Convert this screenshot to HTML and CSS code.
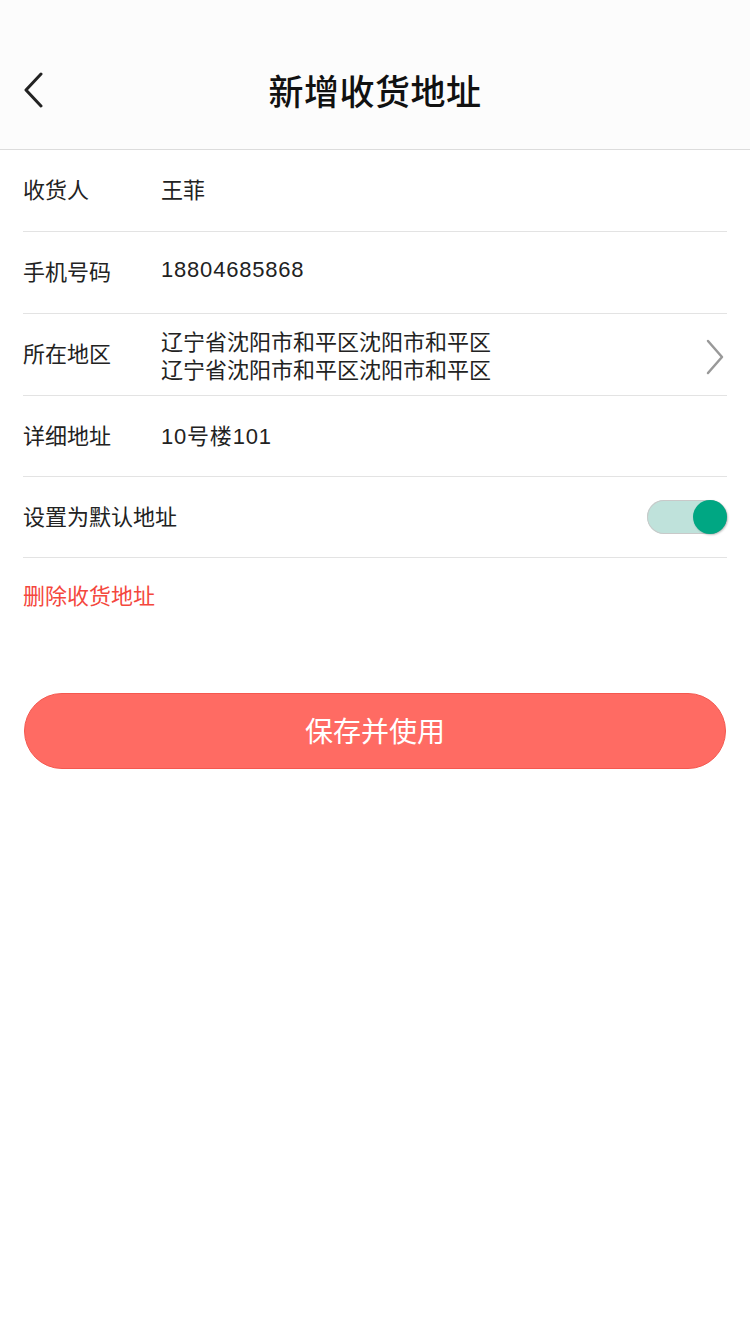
FILE: index.html
```html
<!DOCTYPE html>
<html lang="zh-CN">

<head>
    <meta charset="UTF-8">
    <meta name="viewport" content="width=device-width, initial-scale=1.0">
    <title>新增收货地址</title>
    <link rel="stylesheet" href="styles.css">
</head>

<body>

    <!-- Header -->
    <div class="header">
        <a class="back" href="#">
            <svg width="22" height="36" viewBox="0 0 22 36">
                <polyline points="19,2 4,18 19,34" fill="none" stroke="#222" stroke-width="3" stroke-linecap="round" stroke-linejoin="round" />
            </svg>
        </a>
        <h1>新增收货地址</h1>
    </div>

    <!-- Form -->
    <div class="form">
        <div class="row">
            <span class="label">收货人</span>
            <span class="value">王菲</span>
        </div>
        <div class="row">
            <span class="label">手机号码</span>
            <span class="value digits">18804685868</span>
        </div>
        <div class="row">
            <span class="label">所在地区</span>
            <div class="value multi">
                <div class="line">辽宁省沈阳市和平区沈阳市和平区</div>
                <div class="line">辽宁省沈阳市和平区沈阳市和平区</div>
            </div>
            <svg class="arrow" width="20" height="36" viewBox="0 0 20 36">
                <polyline points="3,2 17,18 3,34" fill="none" stroke="#999" stroke-width="2.5" stroke-linecap="round" stroke-linejoin="round" />
            </svg>
        </div>
        <div class="row short">
            <span class="label">详细地址</span>
            <span class="value digits">10号楼101</span>
        </div>
        <div class="row short">
            <span class="label">设置为默认地址</span>
            <span class="switch on"><span class="knob"></span></span>
        </div>
        <div class="delete">删除收货地址</div>
    </div>

    <div class="actions">
        <button type="button" class="save">保存并使用</button>
    </div>

</body>

</html>
```

FILE: styles.css
```css
body {
    font-family: "Noto Sans CJK SC", "Liberation Sans", sans-serif;
    background: #fff;
    margin: 0;
    color: #222;
}

.header {
    position: relative;
    height: 119px;
    padding-top: 30px;
    background-color: #fcfcfc;
    border-bottom: 1px solid #dcdcdc;
    display: flex;
    align-items: center;
    justify-content: center;
}

.header .back {
    position: absolute;
    left: 22px;
    top: 72px;
    display: flex;
}

.header h1 {
    margin: 0;
    font-size: 35px;
    font-weight: 500;
    color: #111;
    letter-spacing: 0.5px;
}

.form {
    padding: 0 23px;
}

.row {
    display: flex;
    align-items: center;
    padding-bottom: 5px;
    box-sizing: border-box;
    height: 82px;
    border-bottom: 1px solid #e3e3e3;
    font-size: 22px;
}

.row.short {
    height: 81px;
}

.row .label {
    width: 138px;
    flex-shrink: 0;
    white-space: nowrap;
}

.row .value {
    flex: 1;
}

.row .value.digits {
    font-family: "Liberation Sans", "Noto Sans CJK SC", sans-serif;
    letter-spacing: 0.8px;
}

.row .value.multi {
    display: flex;
    flex-direction: column;
    padding-top: 4px;
}

.row .value.multi .line {
    height: 28px;
    line-height: 28px;
}

.row .arrow {
    margin: 10px 2px 0 0;
}

.switch {
    margin-left: auto;
    margin-top: 5px;
    position: relative;
    width: 80px;
    height: 34px;
    border-radius: 17px;
    background: #bfe2db;
    box-shadow: inset 0 0 0 1px #c9c9c9;
}

.switch .knob {
    position: absolute;
    right: 0;
    top: 0;
    width: 34px;
    height: 34px;
    border-radius: 50%;
    background: #00a783;
    box-shadow: 1px 1px 2px rgba(0, 0, 0, 0.25);
}

.delete {
    color: #f4473d;
    font-size: 22px;
    padding-top: 20px;
    line-height: 32px;
}

.actions {
    padding: 0 24px;
    margin-top: 83px;
}

.save {
    width: 100%;
    height: 76px;
    border: 1px solid #f4584f;
    border-radius: 38px;
    background-color: #ff6b63;
    color: #fff;
    font-family: "Noto Sans CJK SC", sans-serif;
    font-size: 28px;
    line-height: 1;
    padding: 0 0 2px;
    cursor: pointer;
}
```
